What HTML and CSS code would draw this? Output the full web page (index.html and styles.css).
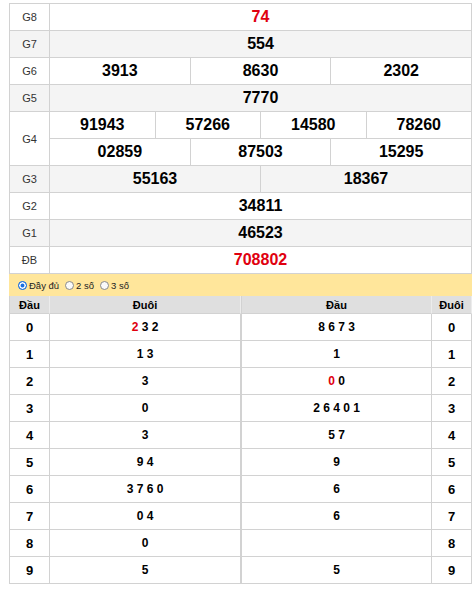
FILE: index.html
```html
<!DOCTYPE html>
<html lang="vi">
<head>
<meta charset="utf-8">
<title>Kết quả</title>
<link rel="stylesheet" href="styles.css">
</head>
<body>
<div class="wrap">
  <div class="kq">
    <div class="row"><div class="lbl">G8</div><div class="nums"><div class="sub"><div class="n red">74</div></div></div></div>
    <div class="row alt"><div class="lbl">G7</div><div class="nums"><div class="sub"><div class="n">554</div></div></div></div>
    <div class="row"><div class="lbl">G6</div><div class="nums"><div class="sub"><div class="n">3913</div><div class="n">8630</div><div class="n">2302</div></div></div></div>
    <div class="row alt"><div class="lbl">G5</div><div class="nums"><div class="sub"><div class="n">7770</div></div></div></div>
    <div class="row"><div class="lbl">G4</div><div class="nums">
      <div class="sub"><div class="n">91943</div><div class="n">57266</div><div class="n">14580</div><div class="n">78260</div></div>
      <div class="sub"><div class="n">02859</div><div class="n">87503</div><div class="n">15295</div></div>
    </div></div>
    <div class="row alt"><div class="lbl">G3</div><div class="nums"><div class="sub"><div class="n">55163</div><div class="n">18367</div></div></div></div>
    <div class="row"><div class="lbl">G2</div><div class="nums"><div class="sub"><div class="n">34811</div></div></div></div>
    <div class="row alt"><div class="lbl">G1</div><div class="nums"><div class="sub"><div class="n">46523</div></div></div></div>
    <div class="row"><div class="lbl">ĐB</div><div class="nums"><div class="sub"><div class="n red">708802</div></div></div></div>
  </div>

  <div class="opts">
    <label class="opt"><span class="radio on"></span>Đầy đủ</label>
    <label class="opt"><span class="radio"></span>2 số</label>
    <label class="opt"><span class="radio"></span>3 số</label>
  </div>

  <div class="loto">
    <div class="lt left">
      <div class="lr head"><div class="c k">Đầu</div><div class="c v">Đuôi</div></div>
      <div class="lr"><div class="c k">0</div><div class="c v"><span class="red">2</span> 3 2</div></div>
      <div class="lr"><div class="c k">1</div><div class="c v">1 3</div></div>
      <div class="lr"><div class="c k">2</div><div class="c v">3</div></div>
      <div class="lr"><div class="c k">3</div><div class="c v">0</div></div>
      <div class="lr"><div class="c k">4</div><div class="c v">3</div></div>
      <div class="lr"><div class="c k">5</div><div class="c v">9 4</div></div>
      <div class="lr"><div class="c k">6</div><div class="c v">3 7 6 0</div></div>
      <div class="lr"><div class="c k">7</div><div class="c v">0 4</div></div>
      <div class="lr"><div class="c k">8</div><div class="c v">0</div></div>
      <div class="lr"><div class="c k">9</div><div class="c v">5</div></div>
    </div>
    <div class="lt right">
      <div class="lr head"><div class="c v">Đầu</div><div class="c k">Đuôi</div></div>
      <div class="lr"><div class="c v">8 6 7 3</div><div class="c k">0</div></div>
      <div class="lr"><div class="c v">1</div><div class="c k">1</div></div>
      <div class="lr"><div class="c v"><span class="red">0</span> 0</div><div class="c k">2</div></div>
      <div class="lr"><div class="c v">2 6 4 0 1</div><div class="c k">3</div></div>
      <div class="lr"><div class="c v">5 7</div><div class="c k">4</div></div>
      <div class="lr"><div class="c v">9</div><div class="c k">5</div></div>
      <div class="lr"><div class="c v">6</div><div class="c k">6</div></div>
      <div class="lr"><div class="c v">6</div><div class="c k">7</div></div>
      <div class="lr"><div class="c v"></div><div class="c k">8</div></div>
      <div class="lr"><div class="c v">5</div><div class="c k">9</div></div>
    </div>
  </div>
</div>
</body>
</html>
```

FILE: styles.css
```css
html, body {
  margin: 0;
  padding: 0;
  background: #fff;
}
body {
  font-family: "Liberation Sans", Arial, sans-serif;
  color: #000;
}
.wrap {
  width: 463px;
  margin: 3px 0 0 9px;
}
.kq {
  border-top: 1px solid #d2d2d2;
  border-left: 1px solid #d2d2d2;
}
.row {
  display: flex;
}
.row.alt {
  background: #f4f4f4;
}
.lbl {
  width: 39px;
  flex: none;
  border-right: 1px solid #d2d2d2;
  border-bottom: 1px solid #d2d2d2;
  display: flex;
  align-items: center;
  justify-content: center;
  font-size: 11px;
  color: #333;
}
.nums {
  flex: 1;
  display: flex;
  flex-direction: column;
}
.sub {
  display: flex;
}
.n {
  flex: 1 1 0;
  height: 26px;
  border-right: 1px solid #d2d2d2;
  border-bottom: 1px solid #d2d2d2;
  display: flex;
  align-items: center;
  justify-content: center;
  font-weight: bold;
  font-size: 16px;
}
.red {
  color: #e0000f;
}
.opts {
  height: 22px;
  background: #ffe69b;
  display: flex;
  align-items: center;
  padding-left: 9px;
  gap: 6px;
  font-size: 9.5px;
  color: #222;
}
.opt {
  display: flex;
  align-items: center;
  gap: 2px;
}
.radio {
  width: 7px;
  height: 7px;
  border-radius: 50%;
  border: 1px solid #8a8a8a;
  background: #fafafa;
  box-sizing: content-box;
}
.radio.on {
  border-color: #1a6fe0;
  background: #1a6fe0;
  box-shadow: inset 0 0 0 1.5px #fff;
}
.loto {
  display: flex;
}
.lt {
  border-left: 1px solid #d2d2d2;
}
.lt.left {
  width: 231px;
}
.lt.right {
  width: 230px;
}
.lr {
  display: flex;
  height: 27px;
}
.c {
  border-right: 1px solid #d2d2d2;
  border-bottom: 1px solid #d2d2d2;
  display: flex;
  align-items: center;
  justify-content: center;
  font-weight: bold;
  font-size: 12px;
  white-space: pre;
}
.c.k {
  width: 39px;
  flex: none;
  font-size: 13px;
}
.c.v {
  flex: 1;
}
.lr.head {
  height: 18px;
  background: #dfdfdf;
}
.lr.head .c {
  font-size: 11px;
  border-right-color: #ececec;
  border-bottom-color: #d2d2d2;
}
```
